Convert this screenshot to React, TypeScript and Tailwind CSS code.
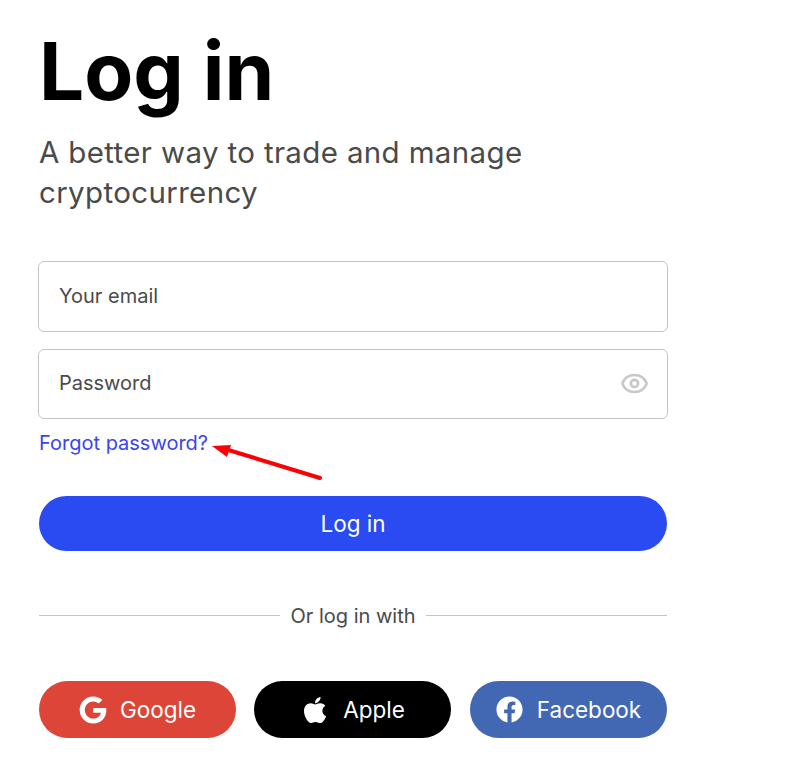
import { FaApple, FaFacebook, FaGoogle } from 'react-icons/fa';
import { Eye } from 'lucide-react';

const socials = [
  { label: 'Google', icon: FaGoogle, bg: 'bg-[#dd4539]', iconSize: 'h-[28px] w-[28px]' },
  { label: 'Apple', icon: FaApple, bg: 'bg-black', iconSize: 'h-[30px] w-[30px]' },
  { label: 'Facebook', icon: FaFacebook, bg: 'bg-[#4268b3]', iconSize: 'h-[27px] w-[27px]' },
];

export default function App() {
  return (
    <div className="min-h-[773px] bg-white pl-[39px] font-['Inter',sans-serif] text-[#4a4a4a]">
      <div className="w-[628px]">
        <h1 className="pt-[21px] text-[80px] leading-[100px] font-bold text-black">Log in</h1>
        <p className="mt-[11px] w-[520px] text-[29.5px] leading-[40px] tracking-[0.35px]">
          A better way to trade and manage cryptocurrency
        </p>

        <div className="mt-[49px] -ml-px flex h-[71px] w-[630px] items-center rounded-[6px] border border-[#c4c4c4] pb-[2px] pl-[20px] text-[20px]">
          Your email
        </div>
        <div className="mt-[17px] -ml-px flex h-[70px] w-[630px] items-center justify-between rounded-[6px] border border-[#c4c4c4] pr-[18px] pb-[2px] pl-[20px] text-[20px]">
          Password
          <Eye className="h-[29px] w-[29px] text-[#c8c8c8]" strokeWidth={2.2} />
        </div>

        <div className="relative mt-[12px] h-[25px] text-[20px] leading-[25px] text-[#3a45ee]">
          Forgot password?
          <svg className="absolute top-[2px] left-[170px]" width="120" height="50" viewBox="0 0 120 50">
            <path d="M16 16 L111 45" stroke="#fb0007" strokeWidth="4" strokeLinecap="round" />
            <path d="M3 13 L22 12 L18 24 Z" fill="#fb0007" />
          </svg>
        </div>

        <button
          type="button"
          className="mt-[40px] flex h-[55px] w-full items-center justify-center rounded-full bg-[#2b4bf2] text-[22.5px] text-white"
        >
          Log in
        </button>

        <div className="mt-[49px] flex items-center gap-[10px] text-[20px]">
          <div className="h-px flex-1 bg-[#c4c4c4]" />
          <span className="pt-px">Or log in with</span>
          <div className="h-px flex-1 bg-[#c4c4c4]" />
        </div>

        <div className="mt-[50px] flex gap-[18px]">
          {socials.map((item) => (
            <button
              key={item.label}
              type="button"
              className={`flex h-[57px] w-[197px] items-center justify-center gap-[13px] rounded-full text-[22.5px] text-white last:ml-px last:gap-[14px] ${item.bg}`}
            >
              <item.icon className={item.iconSize} />
              {item.label}
            </button>
          ))}
        </div>
      </div>
    </div>
  );
}
